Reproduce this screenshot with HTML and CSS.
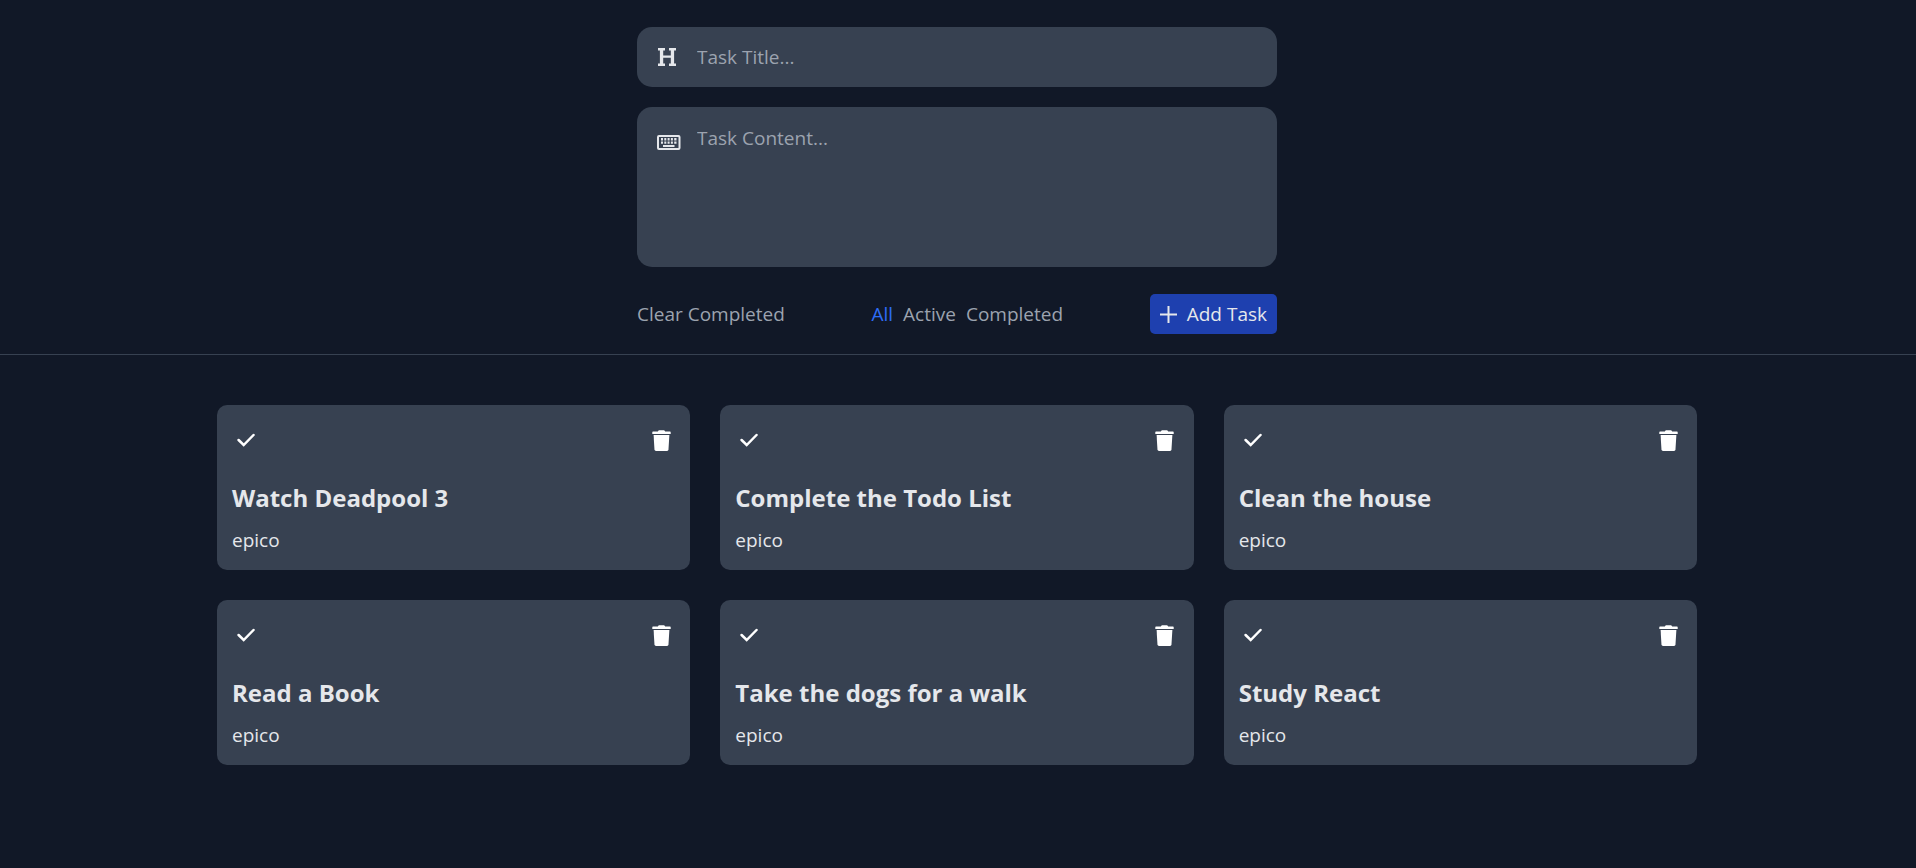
FILE: index.html
```html
<!DOCTYPE html>
<html lang="en">
<head>
<meta charset="utf-8">
<meta name="viewport" content="width=device-width, initial-scale=1">
<title>Todo List</title>
<link rel="stylesheet" href="styles.css">
</head>
<body>
<svg class="sprite" aria-hidden="true">
  <symbol id="check" viewBox="0 0 18 14"><path d="M1.600 7 6.700 12 16.500 2" fill="none" stroke="currentColor" stroke-width="2.500" stroke-linecap="round" stroke-linejoin="miter"/></symbol>
  <symbol id="trash" viewBox="0 0 19 21"><path d="M1 1.500H5.800L6.800 0.300H12.200L13.200 1.500H18Q18.700 1.500 18.700 2.200V4H0.300V2.200Q0.300 1.500 1 1.500z"/><path d="M1.600 5H17.400L16.500 19.500Q16.400 20.900 15 20.900H4Q2.600 20.900 2.500 19.500z"/></symbol>
</svg>
<header class="top">
  <form class="form">
    <div class="field">
      <label for="title" aria-label="Task title">
        <svg class="icon" viewBox="0 0 24 24"><path d="M1 3h7v2.600H6.200v4.800h7.600V5.600H12V3h7v2.600h-1.900v12.800H19V21h-7v-2.600h1.800v-5.600H6.200v5.600H8V21H1v-2.600h1.900V5.600H1z"/></svg>
      </label>
      <input id="title" class="control" type="text" placeholder="Task Title...">
    </div>
    <div class="field field-tall">
      <label for="content" aria-label="Task content">
        <svg class="icon icon-keyboard" viewBox="0 0 24 16"><path fill-rule="evenodd" d="M2 0h19.500A2 2 0 0 1 23.500 2v11a2 2 0 0 1-2 2H2A2 2 0 0 1 0 13V2A2 2 0 0 1 2 0zM2 2v11h19.500V2z"/><path d="M4 3h2v2.500H4zM7.300 3h2v2.500h-2zM10.600 3h2v2.500h-2zM13.900 3h2v2.500h-2zM17.200 3h2.300v2.500h-2.300zM4 6.500h2v2.300H4zM7.300 6.500h2v2.300h-2zM10.600 6.500h2v2.300h-2zM13.900 6.500h2v2.300h-2zM17.200 6.500h2.300v2.300h-2.300zM6 10h11.500v2H6z"/></svg>
      </label>
      <textarea id="content" class="control" placeholder="Task Content..."></textarea>
    </div>
    <div class="actions">
      <button class="link" type="button">Clear Completed</button>
      <div class="filters">
        <button class="link active" type="button">All</button>
        <button class="link" type="button">Active</button>
        <button class="link" type="button">Completed</button>
      </div>
      <button class="add" type="submit">
        <svg class="plus" viewBox="0 0 17 17"><path d="M7.500 0h2v7.500H17v2H9.500V17h-2V9.500H0v-2h7.500z"/></svg>
        Add Task
      </button>
    </div>
  </form>
</header>
<main class="tasks">
  <article class="card">
    <div class="tools"><button class="tool" aria-label="Complete"><svg class="mark"><use href="#check"/></svg></button><button class="tool" aria-label="Delete"><svg class="bin"><use href="#trash"/></svg></button></div>
    <h2>Watch Deadpool 3</h2><p>epico</p>
  </article>
  <article class="card">
    <div class="tools"><button class="tool" aria-label="Complete"><svg class="mark"><use href="#check"/></svg></button><button class="tool" aria-label="Delete"><svg class="bin"><use href="#trash"/></svg></button></div>
    <h2>Complete the Todo List</h2><p>epico</p>
  </article>
  <article class="card">
    <div class="tools"><button class="tool" aria-label="Complete"><svg class="mark"><use href="#check"/></svg></button><button class="tool" aria-label="Delete"><svg class="bin"><use href="#trash"/></svg></button></div>
    <h2>Clean the house</h2><p>epico</p>
  </article>
  <article class="card">
    <div class="tools"><button class="tool" aria-label="Complete"><svg class="mark"><use href="#check"/></svg></button><button class="tool" aria-label="Delete"><svg class="bin"><use href="#trash"/></svg></button></div>
    <h2>Read a Book</h2><p>epico</p>
  </article>
  <article class="card">
    <div class="tools"><button class="tool" aria-label="Complete"><svg class="mark"><use href="#check"/></svg></button><button class="tool" aria-label="Delete"><svg class="bin"><use href="#trash"/></svg></button></div>
    <h2>Take the dogs for a walk</h2><p>epico</p>
  </article>
  <article class="card">
    <div class="tools"><button class="tool" aria-label="Complete"><svg class="mark"><use href="#check"/></svg></button><button class="tool" aria-label="Delete"><svg class="bin"><use href="#trash"/></svg></button></div>
    <h2>Study React</h2><p>epico</p>
  </article>
</main>
</body>
</html>
```

FILE: styles.css
```css
* { box-sizing: border-box; }

body {
  margin: 0;
  min-height: 100vh;
  padding-right: 2px;
  background: #111827;
  color: #e5e7eb;
  font-family: "Segoe UI", "Open Sans", "Noto Sans", sans-serif;
  font-size: 19px;
  line-height: 30px;
}

button, input, textarea { font: inherit; color: inherit; }
button { border: 0; padding: 0; background: none; cursor: pointer; }
svg { display: block; fill: currentColor; }
.sprite { position: absolute; width: 0; height: 0; }

.top {
  display: flex;
  justify-content: center;
  margin-right: -2px;
  padding: 27px 22px 20px 20px;
  border-bottom: 1px solid #374151;
}

.form {
  display: flex;
  flex-direction: column;
  gap: 20px;
  width: 100%;
  max-width: 640px;
}

.field {
  display: flex;
  align-items: center;
  gap: 16px;
  height: 60px;
  padding: 0 20px;
  border-radius: 15px;
  background: #374151;
}

.field-tall { align-items: flex-start; height: 160px; padding: 16px 20px; }
.field-tall label { padding-top: 12px; }

.icon { width: 24px; height: 24px; }
.icon-keyboard { height: 16px; }

.control {
  flex: 1;
  align-self: stretch;
  min-width: 0;
  padding: 0;
  border: 0;
  outline: 0;
  background: none;
  resize: none;
}
.control::placeholder { color: #9ca3af; opacity: 1; }

.actions {
  display: flex;
  align-items: center;
  justify-content: space-between;
  padding-top: 7px;
}
.filters { display: flex; gap: 10px; }
.link { color: #9ca3af; }
.link.active { color: #2e6df6; }

.add {
  display: flex;
  align-items: center;
  gap: 10px;
  height: 40px;
  padding: 0 10px;
  border-radius: 5px;
  background: #1e40af;
}
.plus { width: 17px; height: 17px; }

.tasks {
  display: grid;
  grid-template-columns: repeat(3, 1fr);
  gap: 30px;
  max-width: 1520px;
  margin: 0 auto;
  padding: 50px 20px;
}

.card {
  padding: 15px;
  border-radius: 10px;
  background: #374151;
}
.tools { display: flex; justify-content: space-between; margin-bottom: 20px; }
.tool { display: grid; place-items: center; width: 28px; height: 40px; color: #fff; }
.mark { width: 18px; height: 14px; }
.bin { width: 19px; height: 21px; }

h2 { margin: 0 0 10px; font-size: 24px; line-height: 35px; font-weight: 700; }
p { margin: 0; }
```
